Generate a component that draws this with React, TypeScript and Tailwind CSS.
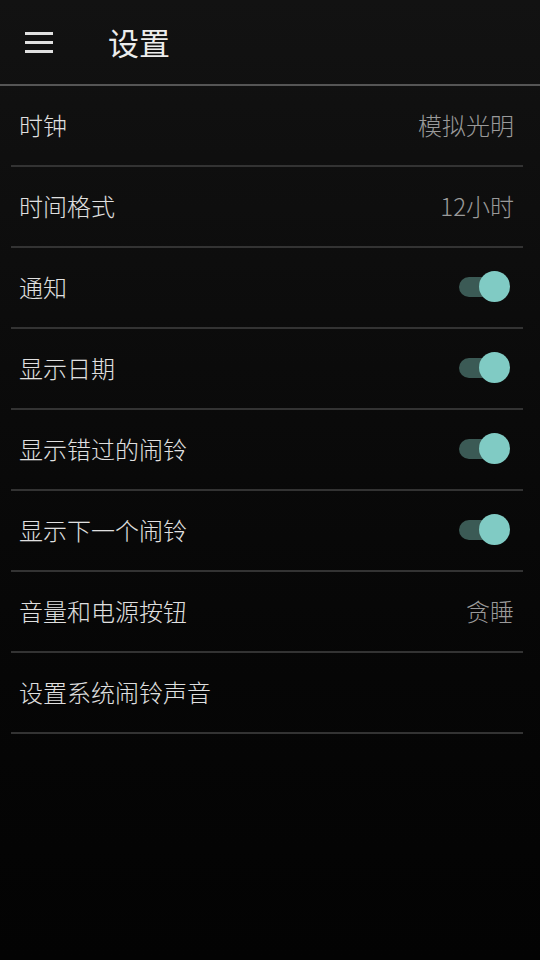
import React from 'react';

type Row = {
  label: string;
  value?: string;
  toggle?: boolean;
};

const rows: Row[] = [
  { label: '时钟', value: '模拟光明' },
  { label: '时间格式', value: '12小时' },
  { label: '通知', toggle: true },
  { label: '显示日期', toggle: true },
  { label: '显示错过的闹铃', toggle: true },
  { label: '显示下一个闹铃', toggle: true },
  { label: '音量和电源按钮', value: '贪睡' },
  { label: '设置系统闹铃声音' },
];

const Toggle = () => (
  <div className="relative w-[51px] h-[32px] mr-[4px]">
    <div className="absolute left-0 top-[6px] w-[42px] h-[20px] rounded-full bg-[#3b5a55]" />
    <div className="absolute right-0 top-0 w-[31px] h-[31px] rounded-full bg-[#80cbc4]" />
  </div>
);

const App = () => {
  return (
    <div
      className="w-[540px] h-[960px] flex flex-col bg-gradient-to-b from-[#121212] to-[#030303]"
      style={{ fontFamily: '"Noto Sans CJK SC", "Noto Sans", sans-serif' }}
    >
      {/* Action bar */}
      <div className="h-[84px] flex items-center shrink-0">
        <div className="ml-[25px] w-[28px] flex flex-col gap-[6px]">
          <div className="h-[3px] bg-[#e0e0e0]" />
          <div className="h-[3px] bg-[#e0e0e0]" />
          <div className="h-[3px] bg-[#e0e0e0]" />
        </div>
        <h1 className="ml-[55px] text-[31px] leading-none text-[#ececec] -mt-[1px]">设置</h1>
      </div>
      <div className="h-[2px] bg-[#555555] shrink-0" />

      {/* Preference list */}
      <div className="pl-[11px] pr-[17px]">
        {rows.map((row, idx) => (
          <div key={idx}>
            <div className="h-[79px] flex items-center justify-between pl-[8px] pr-[9px] -mt-[1px]">
              <span className="text-[24px] leading-none text-[#e0e0e0] font-light">{row.label}</span>
              {row.value && (
                <span className="text-[24px] leading-none text-[#9a9a9a] font-light">{row.value}</span>
              )}
              {row.toggle && <Toggle />}
            </div>
            <div className="h-[2px] bg-[#333333] mt-[1px]" />
          </div>
        ))}
      </div>
    </div>
  );
};

export default App;
